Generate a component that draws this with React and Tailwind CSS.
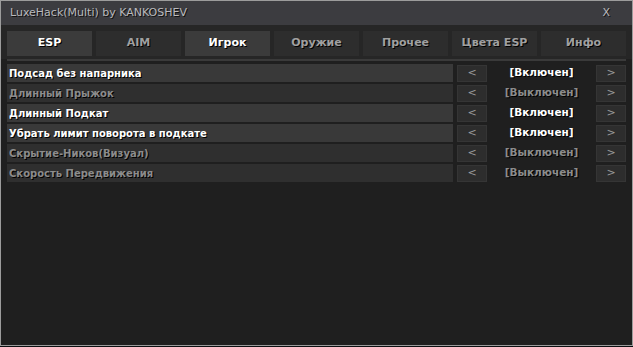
import React, { useState } from "react";

const tabs = ["ESP", "AIM", "Игрок", "Оружие", "Прочее", "Цвета ESP", "Инфо"];

const options = [
    { name: "Подсад без напарника", on: true },
    { name: "Длинный Прыжок", on: false },
    { name: "Длинный Подкат", on: true },
    { name: "Убрать лимит поворота в подкате", on: true },
    { name: "Скрытие-Ников(Визуал)", on: false },
    { name: "Скорость Передвижения", on: false },
];

const font = { fontFamily: '"DejaVu Sans", "Liberation Sans", sans-serif' };

function App() {
    const [active] = useState([0, 2]);

    return (
        <div className="w-[633px] h-[347px] bg-[#0c1012]" style={font}>
            <div className="w-[633px] h-[346px] flex flex-col bg-[#1f1f1f] border border-[#9c9c9c]">
                {/* Title bar */}
                <div className="h-[24px] bg-[#3c3c40] flex items-center justify-between pl-[9px] pr-[22px]">
                    <span className="text-[11px] text-[#b9b9bd] [text-shadow:1px_1px_0_#111]">
                        LuxeHack(Multi) by KANKOSHEV
                    </span>
                    <span className="text-[11px] text-[#b9b9bd] [text-shadow:1px_1px_0_#111]">X</span>
                </div>

                {/* Tabs */}
                <div className="bg-[#262626] pt-[6px] pb-[3px] px-[6px]">
                    <div className="flex gap-[4px]">
                        {tabs.map((t, i) => {
                            const on = active.includes(i);
                            return (
                                <div
                                    key={t}
                                    className={
                                        "flex-1 h-[25px] flex items-center justify-center text-[11px] font-bold [text-shadow:1px_1px_0_#000] " +
                                        (on ? "bg-[#3b3b3b] text-white" : "bg-[#2d2d2d] text-[#a0a0a0]")
                                    }
                                >
                                    {t}
                                </div>
                            );
                        })}
                    </div>
                </div>
                <div className="mx-[6px] h-[2px] bg-[#3a3a3a]" />

                {/* Options */}
                <div className="flex flex-col gap-[2px] px-[6px] pt-[3px]">
                    {options.map((o) => (
                        <div key={o.name} className="flex items-center h-[18px]">
                            <div
                                className={
                                    "w-[446px] h-full flex items-center pl-[2px] text-[10px] font-bold [text-shadow:1px_1px_0_#000] " +
                                    (o.on ? "bg-[#393939] text-white" : "bg-[#2f2f2f] text-[#8c8c8c]")
                                }
                            >
                                {o.name}
                            </div>
                            <div className="ml-[4px] w-[30px] h-[17px] bg-[#2d2d2d] border border-[#353535] flex items-center justify-center text-[11px] text-[#9a9a9a]">
                                &lt;
                            </div>
                            <div
                                className={
                                    "w-[109px] text-center text-[10.5px] font-bold [text-shadow:1px_1px_0_#000] " +
                                    (o.on ? "text-white" : "text-[#8c8c8c]")
                                }
                            >
                                {o.on ? "[Включен]" : "[Выключен]"}
                            </div>
                            <div className="w-[30px] h-[17px] bg-[#2d2d2d] border border-[#353535] flex items-center justify-center text-[11px] text-[#9a9a9a]">
                                &gt;
                            </div>
                        </div>
                    ))}
                </div>
            </div>
        </div>
    );
}

export default App;
